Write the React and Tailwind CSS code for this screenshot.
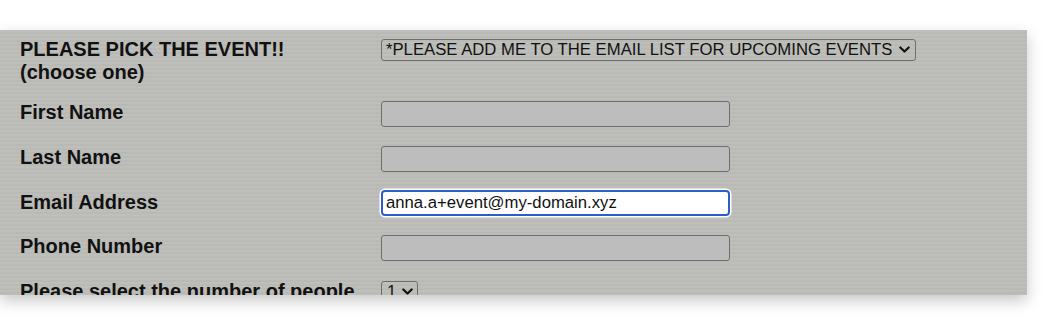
import React from 'react';

const Chevron = ({ className }) => (
  <svg className={className} viewBox="0 0 10 6" fill="none" stroke="#111" strokeWidth="2" strokeLinecap="round" strokeLinejoin="round">
    <path d="M1.2 1.2l3.8 3.6 3.8-3.6" />
  </svg>
);

const rows = [
  { label: 'First Name', value: '' },
  { label: 'Last Name', value: '' },
  { label: 'Email Address', value: 'anna.a+event@my-domain.xyz', focused: true },
  { label: 'Phone Number', value: '' },
];

const App = () => {
  return (
    <div className="min-h-screen bg-white pt-[30px]" style={{ fontFamily: '"Liberation Sans", Arial, sans-serif' }}>
      {/* Form panel */}
      <div className="w-[1027px] h-[265px] overflow-hidden shadow-[0_6px_14px_rgba(0,0,0,0.22)] bg-[repeating-linear-gradient(180deg,#bebeba_0px,#bebeba_2px,#b9b9b5_2px,#b9b9b5_4px)]">
        <div className="grid grid-cols-[361px_1fr] gap-y-[19px] pt-[8px] pl-[20px]">
          <div className="text-[20px] leading-[23px] font-bold text-[#111] -mb-[2px]">
            PLEASE PICK THE EVENT!!
            <br />
            (choose one)
          </div>
          <div>
            <div className="relative w-[535px] h-[22px]">
              <select className="appearance-none w-full h-full bg-transparent border border-[#6e6e6e] rounded-[3px] pl-[4px] text-[16.7px] leading-[20px] text-[#111] outline-none">
                <option>*PLEASE ADD ME TO THE EMAIL LIST FOR UPCOMING EVENTS</option>
              </select>
              <Chevron className="absolute right-[6px] top-[8px] w-[11px] h-[7px] pointer-events-none" />
            </div>
          </div>

          {rows.map((row) => (
            <React.Fragment key={row.label}>
              <div className="text-[20px] leading-[22px] font-bold text-[#111]">{row.label}</div>
              <div>
                {row.focused ? (
                  <input
                    type="text"
                    defaultValue={row.value}
                    className="block w-[349px] h-[26px] -mt-[1px] bg-white border-2 border-[#2c5ec9] rounded-[4px] px-[3px] text-[16.7px] text-[#111] outline-none shadow-[0_0_0_1.5px_#ffffff]"
                  />
                ) : (
                  <input
                    type="text"
                    defaultValue={row.value}
                    className="block w-[349px] h-[26px] bg-[#bdbdbd] border border-[#6e6e6e] rounded-[3px] px-[4px] text-[16.7px] outline-none"
                  />
                )}
              </div>
            </React.Fragment>
          ))}

          <div className="text-[20px] leading-[22px] font-bold text-[#111]">Please select the number of people</div>
          <div>
            <div className="relative w-[37px] h-[22px]">
              <select className="appearance-none w-full h-full bg-transparent border border-[#6e6e6e] rounded-[3px] pl-[5px] text-[16.7px] leading-[20px] text-[#111] outline-none">
                <option>1</option>
              </select>
              <Chevron className="absolute right-[5px] top-[8px] w-[11px] h-[7px] pointer-events-none" />
            </div>
          </div>
        </div>
      </div>
    </div>
  );
};

export default App;
